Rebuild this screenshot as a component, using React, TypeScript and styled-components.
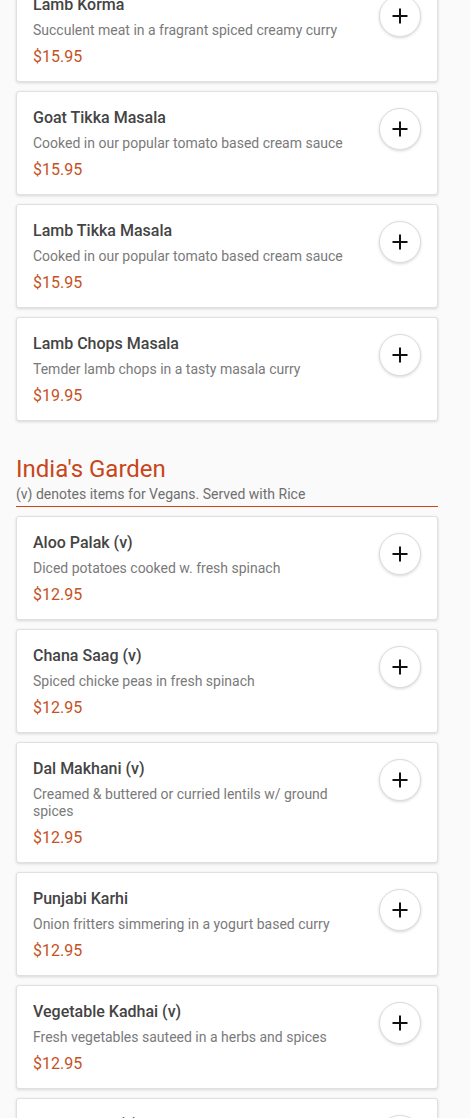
import React from "react";
import styled, { createGlobalStyle } from "styled-components";

const Global = createGlobalStyle`
  html, body { margin: 0; padding: 0; background: #fafafa; }
  body { font-family: Roboto, "Noto Sans", Arial, sans-serif; overflow: hidden; }
`;

const Page = styled.div`
  width: 422px;
  margin: -22px 0 0 16px;
  display: flex;
  flex-direction: column;
  gap: 9px;
`;

const Card = styled.div`
  background: #fff;
  border: 1px solid #e0e0e0;
  border-radius: 3px;
  box-shadow: 0 1px 3px rgba(0, 0, 0, 0.14);
  padding: 16px 16px 14px;
  display: flex;
  align-items: flex-start;
`;

const Info = styled.div`
  flex: 1;
  min-width: 0;
  display: flex;
  flex-direction: column;
`;

const Title = styled.div`
  font-size: 16px;
  line-height: 20px;
  font-weight: 500;
  color: #444;
  margin-bottom: 7px;
`;

const Desc = styled.div`
  font-size: 14px;
  line-height: 17px;
  color: #7a7a7a;
  margin-bottom: 8px;
`;

const Price = styled.div`
  font-size: 16px;
  line-height: 20px;
  color: #c5521f;
`;

const AddButton = styled.button`
  flex: none;
  width: 42px;
  height: 42px;
  margin: 0 0 0 24px;
  border-radius: 50%;
  border: 1px solid #dcdcdc;
  background: #fff;
  box-shadow: 0 1px 3px rgba(0, 0, 0, 0.16);
  display: flex;
  align-items: center;
  justify-content: center;
  padding: 0;
`;

const SectionHeader = styled.div`
  margin-top: 25px;
  padding-bottom: 3px;
  border-bottom: 1px solid #c8461a;
  display: flex;
  flex-direction: column;
  gap: 3px;
`;

const SectionTitle = styled.h2`
  margin: 0;
  font-size: 24px;
  line-height: 28px;
  font-weight: 400;
  color: #c8461a;
`;

const SectionNote = styled.div`
  font-size: 14px;
  line-height: 17px;
  color: #6f6f6f;
`;

const Plus = () => (
  <svg width="18" height="18" viewBox="0 0 18 18">
    <path d="M9 1.5v15M1.5 9h15" stroke="#111" strokeWidth="2" fill="none" />
  </svg>
);

type Item = { name: string; desc: string; price: string };

const Dish = ({ item }: { item: Item }) => (
  <Card>
    <Info>
      <Title>{item.name}</Title>
      <Desc>{item.desc}</Desc>
      <Price>{item.price}</Price>
    </Info>
    <AddButton aria-label="Add">
      <Plus />
    </AddButton>
  </Card>
);

const lamb: Item[] = [
  { name: "Lamb Korma", desc: "Succulent meat in a fragrant spiced creamy curry", price: "$15.95" },
  { name: "Goat Tikka Masala", desc: "Cooked in our popular tomato based cream sauce", price: "$15.95" },
  { name: "Lamb Tikka Masala", desc: "Cooked in our popular tomato based cream sauce", price: "$15.95" },
  { name: "Lamb Chops Masala", desc: "Temder lamb chops in a tasty masala curry", price: "$19.95" },
];

const garden: Item[] = [
  { name: "Aloo Palak (v)", desc: "Diced potatoes cooked w. fresh spinach", price: "$12.95" },
  { name: "Chana Saag (v)", desc: "Spiced chicke peas in fresh spinach", price: "$12.95" },
  { name: "Dal Makhani (v)", desc: "Creamed & buttered or curried lentils w/ ground spices", price: "$12.95" },
  { name: "Punjabi Karhi", desc: "Onion fritters simmering in a yogurt based curry", price: "$12.95" },
  { name: "Vegetable Kadhai (v)", desc: "Fresh vegetables sauteed in a herbs and spices", price: "$12.95" },
  { name: "Malai Kofta (v)", desc: "Vegetable dumplings in a rich creamy sauce", price: "$12.95" },
];

export default function App() {
  return (
    <>
      <Global />
      <Page>
        {lamb.map((it) => (
          <Dish key={it.name} item={it} />
        ))}
        <SectionHeader>
          <SectionTitle>India's Garden</SectionTitle>
          <SectionNote>(v) denotes items for Vegans. Served with Rice</SectionNote>
        </SectionHeader>
        {garden.map((it) => (
          <Dish key={it.name} item={it} />
        ))}
      </Page>
    </>
  );
}
